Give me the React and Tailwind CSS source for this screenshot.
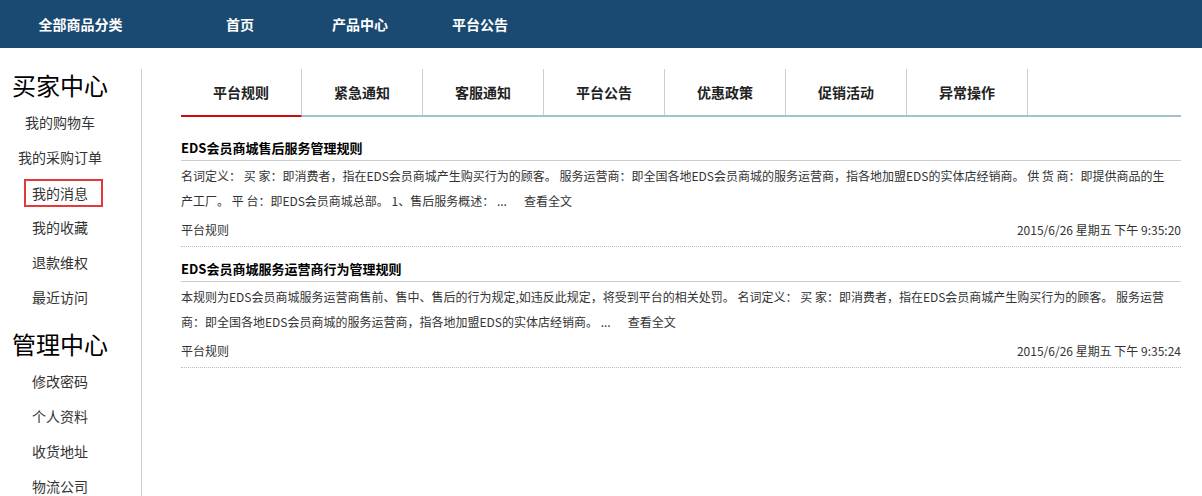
import React from 'react';

const font = { fontFamily: '"Noto Sans CJK SC", "Noto Sans", sans-serif' };

const buyerItems = ['我的购物车', '我的采购订单', '我的消息', '我的收藏', '退款维权', '最近访问'];
const adminItems = ['修改密码', '个人资料', '收货地址', '物流公司'];
const tabs = ['平台规则', '紧急通知', '客服通知', '平台公告', '优惠政策', '促销活动', '异常操作'];

const articles = [
  {
    title: 'EDS会员商城售后服务管理规则',
    lines: [
      '名词定义： 买 家：即消费者，指在EDS会员商城产生购买行为的顾客。 服务运营商：即全国各地EDS会员商城的服务运营商，指各地加盟EDS的实体店经销商。 供 货 商：即提供商品的生',
      '产工厂。 平 台：即EDS会员商城总部。 1、售后服务概述： ...',
    ],
    date: '2015/6/26 星期五 下午 9:35:20',
  },
  {
    title: 'EDS会员商城服务运营商行为管理规则',
    lines: [
      '本规则为EDS会员商城服务运营商售前、售中、售后的行为规定,如违反此规定，将受到平台的相关处罚。 名词定义： 买 家：即消费者，指在EDS会员商城产生购买行为的顾客。 服务运营',
      '商：即全国各地EDS会员商城的服务运营商，指各地加盟EDS的实体店经销商。 ...',
    ],
    date: '2015/6/26 星期五 下午 9:35:24',
  },
];

function SideGroup({ title, items, first }) {
  return (
    <div className={first ? '' : 'mt-[13px]'}>
      <div className="h-[36px] text-[24px] leading-[32px] text-black">{title}</div>
      <ul>
        {items.map((item) => (
          <li key={item} className="h-[35px] flex items-center justify-center text-[14px] text-[#333]">
            {item === '我的消息' ? (
              <span className="ml-[7px] border-2 border-[#e4393c] pl-[6px] pr-[13px] leading-[24px]">{item}</span>
            ) : (
              <span>{item}</span>
            )}
          </li>
        ))}
      </ul>
    </div>
  );
}

export default function App() {
  return (
    <div className="w-[1202px] h-[496px] overflow-hidden bg-white" style={font}>
      <header className="h-[48px] bg-[#1a4a72] flex text-white text-[14px] font-bold leading-[48px]">
        <div className="w-[161px] text-center">全部商品分类</div>
        <div className="ml-[19px] w-[120px] text-center">首页</div>
        <div className="w-[120px] text-center">产品中心</div>
        <div className="w-[120px] text-center">平台公告</div>
      </header>

      <div className="flex mt-[21px]">
        <aside className="w-[142px] h-[430px] border-r border-[#ccc]">
          <div className="w-[120px] text-center">
            <SideGroup title="买家中心" items={buyerItems} first />
            <SideGroup title="管理中心" items={adminItems} />
          </div>
        </aside>

        <main className="ml-[39px] w-[1000px]">
          <div className="flex h-[48px] border-b-2 border-[#9dc1d5]">
            {tabs.map((tab, i) => (
              <div
                key={tab}
                className={
                  'w-[121px] h-[46px] border-r border-[#ccc] flex items-center justify-center text-[14px] font-bold text-[#222] ' +
                  (i === 0 ? 'h-[48px] border-b-2 border-b-[#d20a10] -mb-[2px]' : '')
                }
              >
                {tab}
              </div>
            ))}
          </div>

          <div className="mt-[9px]">
            {articles.map((a) => (
              <div key={a.title} className="pt-[10px] pb-[4px] border-b border-dotted border-[#bbb]">
                <div className="h-[25px] leading-[24px] text-[13px] font-bold text-black border-b border-[#ccc]">
                  {a.title}
                </div>
                <div className="pt-[2px] text-[12px] leading-[25px] text-[#333]">
                  <div className="whitespace-nowrap">{a.lines[0]}</div>
                  <div className="whitespace-nowrap">
                    {a.lines[1]}
                    <span className="ml-[17px]">查看全文</span>
                  </div>
                </div>
                <div className="mt-[4px] flex justify-between text-[12px] leading-[25px] text-[#333]">
                  <span>平台规则</span>
                  <span>{a.date}</span>
                </div>
              </div>
            ))}
          </div>
        </main>
      </div>
    </div>
  );
}
